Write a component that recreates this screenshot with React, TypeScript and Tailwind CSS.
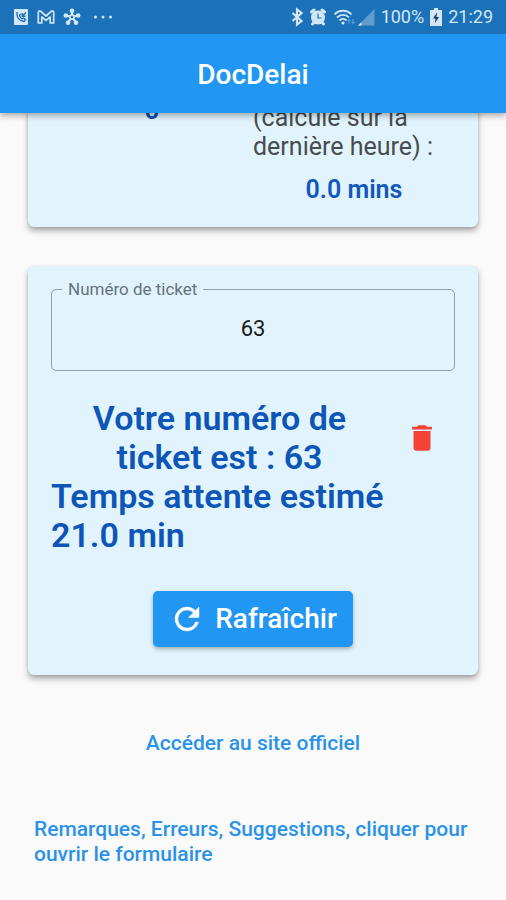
import { useState } from "react";

const REFRESH =
  "M17.65 6.35A7.958 7.958 0 0 0 12 4a8 8 0 1 0 7.73 10h-2.08A5.99 5.99 0 0 1 12 18c-3.31 0-6-2.69-6-6s2.69-6 6-6c1.66 0 3.14.69 4.22 1.78L13 11h7V4l-2.35 2.35z";
const TRASH = "M6 19c0 1.1.9 2 2 2h8c1.1 0 2-.9 2-2V7H6v12zM19 4h-3.5l-1-1h-5l-1 1H5v2h14V4z";

function StatusBar() {
  return (
    <div className="flex h-[34px] items-center justify-between bg-[#1b72b9] px-[13px] text-[18px] leading-[34px] text-[#d3e6f6]">
      <div className="flex items-center gap-2">
        <svg className="h-4 w-4" viewBox="0 0 16 16" aria-hidden="true">
          <rect width="14" height="16" x="1" rx="1" fill="currentColor" />
          <path
            d="M4 3c-.5 5 2 9 7 9.500l1.500-2-2-1.500-1.500 1C7.500 9 6.500 7.500 6.500 6L8 5M13 3.500L9.500 7M9.300 4v3.200h3.200"
            fill="none"
            stroke="#1b72b9"
            strokeWidth="1.400"
          />
        </svg>
        <svg className="h-4 w-[18px]" viewBox="0 0 18 16" aria-hidden="true">
          <path
            d="M1.300 14V3.500C1.300 1.800 2.800 1.500 3.800 2.400L9 7l5.200-4.600c1-.9 2.500-.6 2.500 1.100V14h-3.500V8L9 11.300 4.800 8v6z"
            fill="none"
            stroke="currentColor"
            strokeWidth="1.700"
            strokeLinejoin="round"
          />
        </svg>
        <svg className="h-[18px] w-[18px]" viewBox="0 0 18 18" aria-hidden="true">
          <g stroke="currentColor" strokeWidth="2.200" fill="none">
            <path d="M9 9V3M9 9L3 7.500M9 9l6-1.500M9 9l-4 5.500M9 9l4 5.500" />
          </g>
          <g fill="currentColor">
            <circle cx="9" cy="9" r="3" />
            <circle cx="9" cy="2.800" r="2.300" />
            <circle cx="2.800" cy="7.500" r="2.300" />
            <circle cx="15.200" cy="7.500" r="2.300" />
            <circle cx="5" cy="14.800" r="2.300" />
            <circle cx="13" cy="14.800" r="2.300" />
          </g>
          <circle cx="9" cy="9" r="1.300" fill="#1b72b9" />
        </svg>
        <svg className="ml-1 h-4 w-5" viewBox="0 0 20 16" fill="currentColor" aria-hidden="true">
          <circle cx="2.500" cy="8" r="1.500" />
          <circle cx="10" cy="8" r="1.500" />
          <circle cx="17.500" cy="8" r="1.500" />
        </svg>
      </div>
      <div className="flex items-center gap-1.5">
        <svg className="h-5 w-3" viewBox="0 0 12 20" aria-hidden="true">
          <path
            d="M1.500 6l9 8L6 17.500v-15L10.500 6l-9 8"
            fill="none"
            stroke="currentColor"
            strokeWidth="2.200"
          />
        </svg>
        <svg className="h-[18px] w-[18px]" viewBox="0 0 18 18" aria-hidden="true">
          <g stroke="currentColor" strokeWidth="3" strokeLinecap="round">
            <path d="M2.500 4L5 2M15.500 4L13 2M3.500 16l2-2M14.500 16l-2-2" />
          </g>
          <circle cx="9" cy="9.500" r="7" fill="currentColor" />
          <path d="M9 5.500V10h3.500" fill="none" stroke="#1b72b9" strokeWidth="1.200" />
        </svg>
        <svg className="h-[18px] w-[22px]" viewBox="0 0 22 18" aria-hidden="true">
          <g fill="none" stroke="currentColor" strokeWidth="1.800">
            <path d="M1.500 6.500c4.500-5 12.500-5 17 0M4 9.500c3.500-3.500 9-3.500 12 0M6.500 12.500c2-2 5-2 7 0" />
          </g>
          <circle cx="10" cy="15" r="1.600" fill="currentColor" />
          <path
            d="M16 15.500v-4M14.500 13L16 11.500l1.500 1.500M20 11v4.500M18.500 14l1.500 1.500 1.500-1.500"
            fill="none"
            stroke="#6faadb"
          />
        </svg>
        <svg className="-ml-1 h-[18px] w-[18px]" viewBox="0 0 18 18" aria-hidden="true">
          <path d="M17.500 1v16.500H1z" fill="#5f9dd1" />
          <path d="M4.500 14v3.500H1z" fill="currentColor" />
        </svg>
        <span>100%</span>
        <svg className="h-[18px] w-3" viewBox="0 0 12 18" aria-hidden="true">
          <path d="M4 0h4v2h4v16H0V2h4z" fill="currentColor" />
          <path d="M7 4.500L3 10.500h2.500L5 15l4-6H6.500z" fill="#123f66" />
        </svg>
        <span>21:29</span>
      </div>
    </div>
  );
}

export default function App() {
  const [ticket, setTicket] = useState("63");
  const card =
    "rounded-md bg-[#e1f4fd] px-[23px] shadow-[0_4px_6px_rgba(0,0,0,0.3),0_1px_3px_rgba(0,0,0,0.12)]";

  return (
    <div className="min-h-screen bg-[#fafafa] font-['Roboto',sans-serif]">
      <header className="sticky top-0 z-10 shadow-[0_3px_6px_rgba(0,0,0,0.3)]">
        <StatusBar />
        <div className="flex items-center justify-center bg-[#2196f3] pt-[25px] pb-[22px]">
          <h1 className="text-[28px] leading-8 font-medium text-white">DocDelai</h1>
        </div>
      </header>

      <main className="px-7">
        <section className={`${card} -mt-10 grid grid-cols-2 pt-[22px] pb-[22px]`}>
          <p className="text-center text-[26px] leading-[30px] font-semibold text-[#0d4fb5]">0</p>
          <div className="pt-2">
            <p className="text-[25px] leading-[29px] text-[#484c4e]">
              (calculé sur la dernière heure) :
            </p>
            <p className="pt-3.5 text-center text-[25px] leading-[30px] font-semibold text-[#1257bb]">
              0.0 mins
            </p>
          </div>
        </section>

        <section className={`${card} mt-[39px] pt-3.5 pb-7`}>
          <fieldset className="rounded-[5px] border border-[#8fa0a8] px-2.5 pb-[27px]">
            <legend className="px-1.5 text-[17px] leading-[18px] text-[#66737a]">
              <label htmlFor="ticket">Numéro de ticket</label>
            </legend>
            <input
              id="ticket"
              inputMode="numeric"
              value={ticket}
              onChange={(event) => setTicket(event.target.value)}
              className="mt-[17px] block h-7 w-full bg-transparent text-center text-[22px] leading-7 text-[#15191b] outline-none"
            />
          </fieldset>

          <div className="mt-7 text-[34px] leading-[39px] font-semibold text-[#0d56b8]">
            <div className="flex items-center">
              <p className="flex-1 text-center">{`Votre numéro de ticket est : ${ticket}`}</p>
              <button
                type="button"
                aria-label="Supprimer le ticket"
                className="flex h-[67px] w-[67px] items-center justify-center text-[#f44336]"
              >
                <svg className="h-[34px] w-[34px]" viewBox="0 0 24 24" fill="currentColor" aria-hidden="true">
                  <path d={TRASH} />
                </svg>
              </button>
            </div>
            <p>Temps attente estimé 21.0 min</p>
          </div>

          <div className="mt-9 flex justify-center">
            <button
              type="button"
              className="flex h-14 items-center gap-2.5 rounded-[5px] bg-[#2196f3] px-4 text-[28px] leading-8 font-medium text-white shadow-[0_2px_4px_rgba(0,0,0,0.3)]"
            >
              <svg className="h-9 w-9" viewBox="0 0 24 24" fill="currentColor" aria-hidden="true">
                <path d={REFRESH} stroke="currentColor" strokeWidth="0.300" />
              </svg>
              Rafraîchir
            </button>
          </div>
        </section>

        <nav className="flex flex-col items-center gap-[61px] px-1.5 pt-14 pb-8 text-[21px] leading-[25px] font-medium text-[#2a93e8]">
          <a href="#site">Accéder au site officiel</a>
          <a href="#formulaire" className="self-start">
            Remarques, Erreurs, Suggestions, cliquer pour ouvrir le formulaire
          </a>
        </nav>
      </main>
    </div>
  );
}
